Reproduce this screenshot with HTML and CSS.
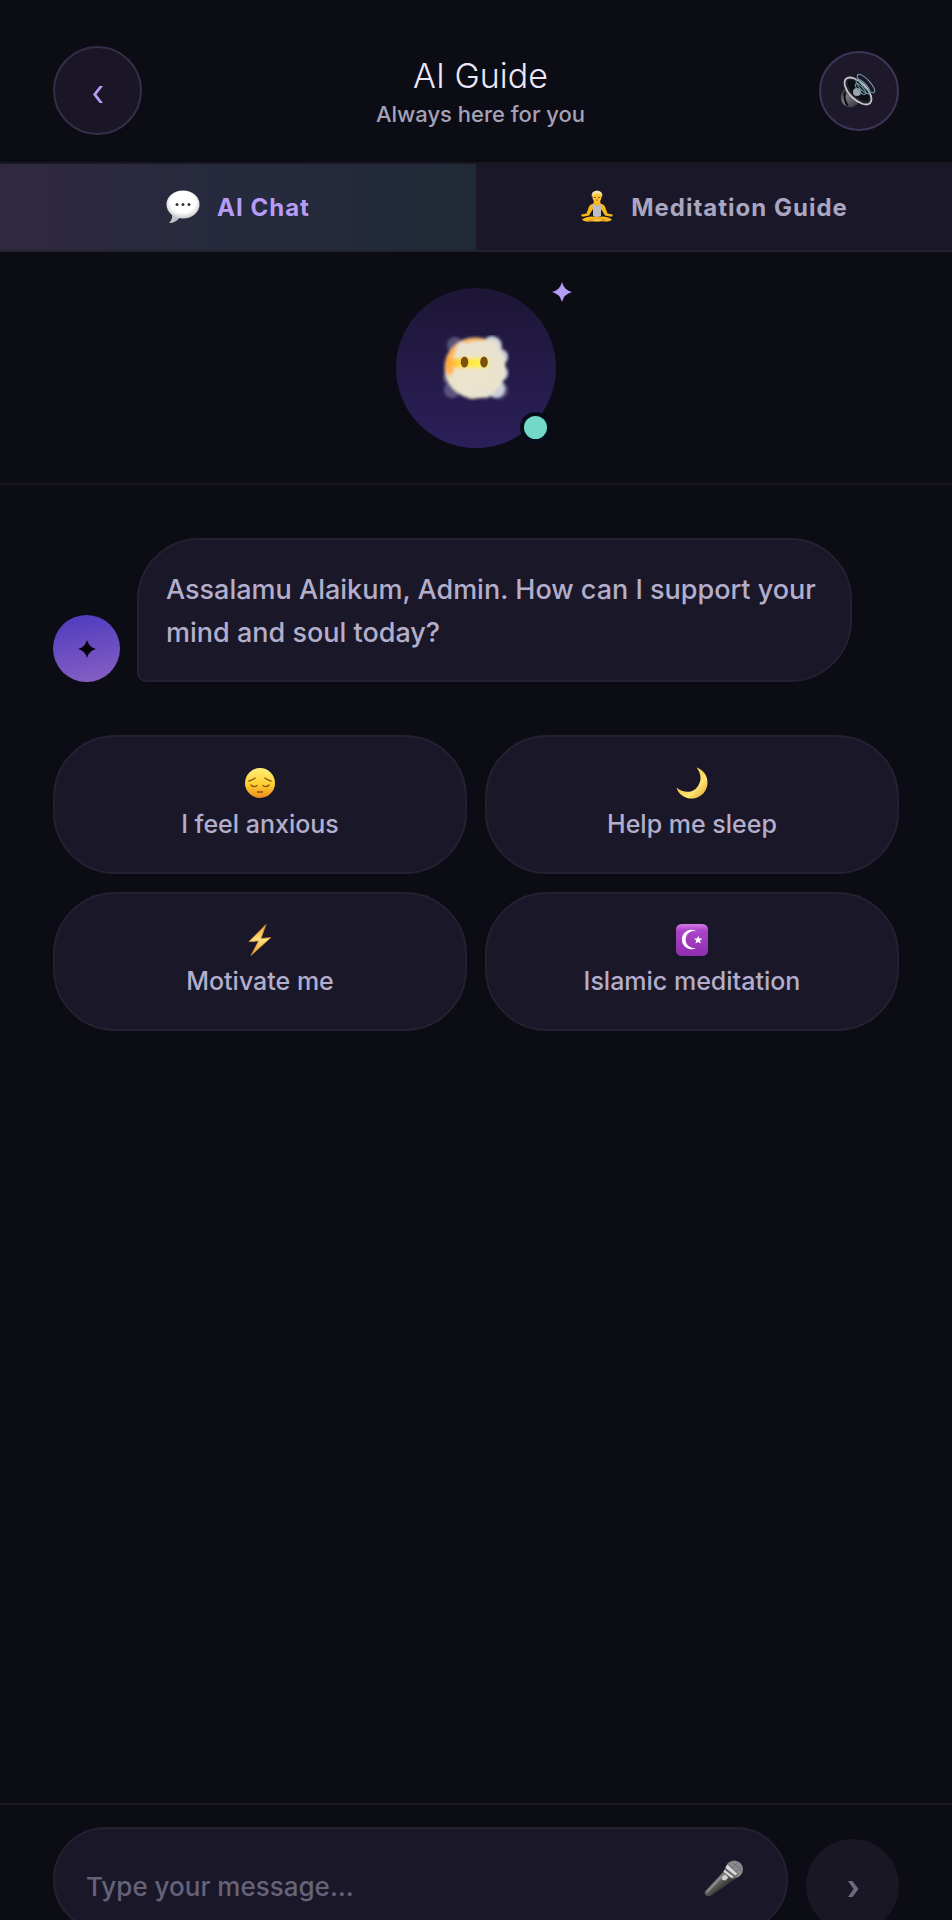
FILE: index.html
```html
<!DOCTYPE html>
<html lang="en">
<head>
<meta charset="utf-8">
<meta name="viewport" content="width=device-width, initial-scale=1">
<title>AI Guide</title>
<link rel="stylesheet" href="styles.css">
</head>
<body>
<div class="app">
  <header class="header">
    <button class="round back" aria-label="Back">
      <svg width="12" height="20" viewBox="0 0 12 20"><path d="M7.600 1H11L4.500 9.500L11 18H7.600L1 9.500Z" fill="#b79cf5"/></svg>
    </button>
    <div class="heading">
      <h1 class="title">AI Guide</h1>
      <p class="subtitle">Always here for you</p>
    </div>
    <button class="round sound" aria-label="Sound">
      <svg width="36" height="36" viewBox="0 0 36 36">
        <defs>
          <linearGradient id="spk" x1="0" y1="0" x2="1" y2="1"><stop offset="0" stop-color="#1a1b20"/><stop offset=".4" stop-color="#77767d"/><stop offset="1" stop-color="#25252b"/></linearGradient>
        </defs>
        <path d="M1 21L5 15L20 29L15 33Q10 36 4 32Q0 28 1 21Z" fill="url(#spk)"/>
        <path d="M5 19Q3 26 8 33" stroke="#090a0d" stroke-width="2" fill="none"/>
        <ellipse cx="18" cy="18" rx="8.500" ry="17" transform="rotate(-45 18 18)" fill="#222329" stroke="#c7c5cb" stroke-width="1.800"/>
        <ellipse cx="18.500" cy="17.500" rx="6" ry="14" transform="rotate(-45 18.500 17.500)" fill="#0d1116"/>
        <circle cx="17" cy="19" r="4" fill="#9aa4ad"/>
        <g fill="none" stroke="#719aa6" stroke-width="1.100">
          <ellipse cx="20.500" cy="16" rx="2.500" ry="7" transform="rotate(-43 20.500 16)"/>
          <ellipse cx="23" cy="13.500" rx="3.500" ry="9.500" transform="rotate(-43 23 13.500)"/>
          <ellipse cx="26" cy="10.500" rx="4" ry="12" transform="rotate(-43 26 10.500)"/>
        </g>
      </svg>
    </button>
  </header>

  <nav class="tabs">
    <button class="tab tab-active">
      <svg width="34" height="34" viewBox="0 0 34 34">
        <defs><radialGradient id="bub" cx=".5" cy=".42" r=".58"><stop offset=".65" stop-color="#fff"/><stop offset="1" stop-color="#c9c8cc"/></radialGradient></defs>
        <path d="M6 24Q7 29 3 33Q10 33 14 27Z" fill="#c2c1c6"/>
        <ellipse cx="17" cy="14.500" rx="16.500" ry="14" fill="url(#bub)"/>
        <g fill="#35343c"><circle cx="11" cy="14.500" r="1.500"/><circle cx="17" cy="14.500" r="1.500"/><circle cx="23" cy="14.500" r="1.500"/></g>
      </svg>
      <span>AI Chat</span>
    </button>
    <button class="tab">
      <svg width="34" height="34" viewBox="0 0 34 34">
        <path d="M14 11H20L21 14Q24.500 14 25.500 18L27.500 23.500L32.500 24.500Q33.500 27 30 26.500L25 25.500L21 19V25H13V19L9 25.500L4 26.500Q.5 27 1.500 24.500L6.500 23.500L8.500 18Q9.500 14 13 14Z" fill="#f7b719"/>
        <path d="M2 29.500Q8 25 17 27Q26 25 32 29.500Q30 32 24 31.500L17 30L10 31.500Q4 32 2 29.500Z" fill="#fbb81d"/>
        <path d="M9 30.500Q16 27 25 29.500Q20 33 9 30.500Z" fill="#ffd04a" stroke="#cf850d" stroke-width=".7"/>
        <path d="M12 14L15 15Q17 17 19 15L22 14L21 19V26Q17 28 13 26V19Z" fill="#bfbdc4"/>
        <ellipse cx="17" cy="7" rx="4.500" ry="5.500" fill="#ffc52b"/>
        <path d="M12 7.500Q10.500 1 17 .5Q23.500 1 22 7.500Q21 3.500 17 3.500Q13 3.500 12 7.500Z" fill="#f5e2aa"/>
        <path d="M14 7.500H16M18 7.500H20M16 10H18" stroke="#895514" fill="none"/>
      </svg>
      <span>Meditation Guide</span>
    </button>
  </nav>

  <section class="hero">
    <div class="orb">
      <svg width="68" height="66" viewBox="0 0 68 66">
        <defs>
          <linearGradient id="face" x1="0" y1="0" x2="1" y2="0"><stop offset="0" stop-color="#ffa03c"/><stop offset=".3" stop-color="#ffda3c"/><stop offset=".7" stop-color="#fff04c"/><stop offset="1" stop-color="#e7e2c9"/></linearGradient>
          <filter id="soft" x="-20%" y="-20%" width="140%" height="140%"><feGaussianBlur stdDeviation="1.500"/></filter>
        </defs>
        <g filter="url(#soft)">
          <g fill="#8f8daf" opacity=".5"><circle cx="13" cy="10" r="8"/><circle cx="10" cy="55" r="8"/><circle cx="57" cy="55" r="9"/><circle cx="8" cy="43" r="7"/></g>
          <g fill="#ccd0dc"><circle cx="50" cy="11" r="10"/><circle cx="58" cy="22" r="8"/><circle cx="58" cy="38" r="8"/><circle cx="54" cy="54" r="9"/></g>
          <circle cx="33" cy="33" r="30.500" fill="#ece4c8"/>
          <path d="M3 36Q2 14 20 6Q36 0 45 5L28 7L14 15L10 25L12 36L8 42Z" fill="#ffb555"/>
          <path d="M4 23H48Q54 28 48 33H4Z" fill="url(#face)"/>
          <g fill="#e8e2cf"><circle cx="21" cy="14" r="7"/><circle cx="35" cy="13" r="7"/><circle cx="49" cy="14" r="9"/><circle cx="56" cy="27" r="7"/><circle cx="55" cy="41" r="8"/><circle cx="43" cy="55" r="8"/><circle cx="30" cy="56" r="8"/></g>
          <g fill="#ebe4cd"><circle cx="16" cy="42" r="7"/><circle cx="28" cy="43" r="8"/><circle cx="42" cy="43" r="9"/><circle cx="20" cy="52" r="7"/></g>
        </g>
        <g fill="#7c500c"><ellipse cx="22.500" cy="27" rx="3.800" ry="5.500"/><ellipse cx="42" cy="27" rx="3.800" ry="5.500"/></g>
      </svg>
      <span class="status"></span>
      <svg class="sparkle" width="20" height="20" viewBox="0 0 20 20"><path d="M10 0Q12 8 20 10Q12 12 10 20Q8 12 0 10Q8 8 10 0Z" fill="#b79cf5"/></svg>
    </div>
  </section>

  <main class="chat">
    <div class="message">
      <div class="avatar"><svg width="18" height="18" viewBox="0 0 20 20"><path d="M10 0Q12 8 20 10Q12 12 10 20Q8 12 0 10Q8 8 10 0Z" fill="#05040a"/></svg></div>
      <p class="bubble">Assalamu Alaikum, Admin. How can I support your mind and soul today?</p>
    </div>
    <div class="prompts">
      <button class="prompt">
        <svg width="32" height="32" viewBox="0 0 32 32">
          <defs><linearGradient id="sad" x1="0" y1="0" x2="0" y2="1"><stop offset="0" stop-color="#fff07a"/><stop offset=".55" stop-color="#fdcf31"/><stop offset="1" stop-color="#ee8a1c"/></linearGradient></defs>
          <circle cx="16" cy="16" r="15" fill="url(#sad)"/>
          <g fill="none" stroke="#8a5310" stroke-width="1.400" stroke-linecap="round"><path d="M5 14Q9 13 11 11M27 14Q23 13 21 11M7 18Q10 21 13 18.500M25 18Q22 21 19 18.500M13.500 25H18.500"/></g>
        </svg>
        <span>I feel anxious</span>
      </button>
      <button class="prompt">
        <svg width="32" height="32" viewBox="0 0 32 32">
          <defs><linearGradient id="moon" x1="0" y1="0" x2="1" y2="1"><stop offset=".3" stop-color="#f3c444"/><stop offset=".65" stop-color="#ffe474"/><stop offset="1" stop-color="#dc9c28"/></linearGradient></defs>
          <path d="M20.500 .5C34 5 35 22 24 29C15 35 3 30 .5 20.500C8 27 18 26 22 19C26 13 25 6 20.500 .5Z" fill="url(#moon)"/>
        </svg>
        <span>Help me sleep</span>
      </button>
      <button class="prompt">
        <svg width="32" height="32" viewBox="0 0 32 32">
          <defs><linearGradient id="bolt" x1="0" y1="0" x2="0" y2="1"><stop offset="0" stop-color="#f2a932"/><stop offset=".5" stop-color="#ffe180"/><stop offset="1" stop-color="#ed9c32"/></linearGradient></defs>
          <path d="M22 .5L5 17.500L14.500 17L7 31.500L27 13.500L17 14.500Z" fill="url(#bolt)" stroke="#d78928" stroke-width=".7"/>
        </svg>
        <span>Motivate me</span>
      </button>
      <button class="prompt">
        <svg width="32" height="32" viewBox="0 0 32 32">
          <defs><linearGradient id="isl" x1="0" y1="0" x2="0" y2="1"><stop offset="0" stop-color="#d57be8"/><stop offset=".2" stop-color="#ad45c8"/><stop offset="1" stop-color="#8f2caf"/></linearGradient></defs>
          <rect width="32" height="32" rx="5.500" fill="url(#isl)"/>
          <path d="M21 7.500A9.700 9.700 0 1 0 21 23.500A8.500 8.500 0 1 1 21 7.500Z" fill="#fff"/>
          <path d="M22.200 11.500L23.200 14.400L26.500 14.600L24 16.600L24.800 19.600L22.200 17.900L19.400 19.600L20.300 16.500L18 14.500L21.200 14.400Z" fill="#fff"/>
        </svg>
        <span>Islamic meditation</span>
      </button>
    </div>
  </main>

  <form class="composer">
    <div class="field">
      <input class="input" type="text" aria-label="Message" placeholder="Type your message…">
      <button class="mic" type="button" aria-label="Record voice">
        <svg width="39" height="37" viewBox="0 0 40 38">
          <defs><linearGradient id="mic" x1="0" y1="0" x2="1" y2="1"><stop offset=".3" stop-color="#8b8b8b"/><stop offset=".6" stop-color="#3d403d"/><stop offset="1" stop-color="#222622"/></linearGradient></defs>
          <path d="M21 11L31 20L8 36Q3 39 1 35Q0 33 2 31Z" fill="url(#mic)"/>
          <path d="M3 33L20 15" stroke="#929292" stroke-width="1.500"/>
          <circle cx="31" cy="9.500" r="9" fill="#8b8a8d"/>
          <path d="M25 4L36 15M29 2L39 11M23 10L32 18M35 2L24 13M39 6L29 16" stroke="#68676b" stroke-width=".8"/>
          <path d="M23 7L34 16L31 20L20 11Z" fill="#696a6b"/>
          <path d="M24 5L34 14L32 16L22 8ZM21 10L30 17L29 19L20 12Z" fill="#d9d8da"/>
          <path d="M19 17L22 15L25 18L22 21L18 20Z" fill="#d0d0cf"/>
        </svg>
      </button>
    </div>
    <button class="send" type="submit" aria-label="Send">
      <svg width="12" height="16" viewBox="0 0 12 16"><path d="M1 0H5.500L11.500 8L5.500 16H1L6.500 8Z" fill="#6c6980"/></svg>
    </button>
  </form>
</div>
</body>
</html>
```
FILE: styles.css
```css
* {
  box-sizing: border-box;
}

body {
  margin: 0;
  overflow: hidden;
  background: #0c0c15;
  color: #b3aecb;
  font-family: Inter, "Liberation Sans", sans-serif;
}

button,
input {
  margin: 0;
  padding: 0;
  border: 0;
  background: none;
  color: inherit;
  font: inherit;
}

svg {
  display: block;
  flex: none;
}

.app {
  display: flex;
  flex-direction: column;
  height: 100vh;
}

.header {
  display: flex;
  align-items: center;
  justify-content: space-between;
  padding: 46px 53px 27px;
  border-bottom: 2px solid #171622;
}

.round {
  display: flex;
  align-items: center;
  justify-content: center;
  border: 2px solid #342e48;
  border-radius: 50%;
  background: #1b1626;
}

.back {
  width: 89px;
  height: 89px;
  padding-top: 8px;
}

.sound {
  width: 80px;
  height: 80px;
  padding-right: 2px;
  border-color: #3d3557;
  background: #1e182b;
}

.heading {
  padding-top: 2px;
  text-align: center;
}

.title {
  margin: 0;
  color: #ebe8fa;
  font-size: 34px;
  font-weight: 300;
  line-height: 44px;
}

.subtitle {
  margin: 0;
  color: #a5a1b8;
  font-size: 22px;
  font-weight: 500;
  line-height: 32px;
}

.tabs {
  display: grid;
  grid-template-columns: 1fr 1fr;
  border-bottom: 2px solid #232230;
  background: #1a1828;
}

.tab {
  display: flex;
  align-items: center;
  justify-content: center;
  gap: 17px;
  height: 86px;
  color: #aaa5c0;
  font-size: 24px;
  font-weight: 700;
  letter-spacing: 1px;
}

.tab-active {
  background: linear-gradient(90deg, #302841, #262a3d 50%, #202936);
  color: #b79cf5;
}

.hero {
  display: flex;
  justify-content: center;
  padding: 36px 36px 35px;
  border-bottom: 2px solid #171622;
}

.orb {
  position: relative;
  display: flex;
  align-items: center;
  justify-content: center;
  width: 160px;
  height: 160px;
  border-radius: 50%;
  background: linear-gradient(180deg, #1d1636, #2b1f59);
}

.status {
  position: absolute;
  right: 5px;
  bottom: 5px;
  width: 31px;
  height: 31px;
  border: 4px solid #050d18;
  border-radius: 50%;
  background: #73d8ca;
}

.sparkle {
  position: absolute;
  top: -6px;
  right: -16px;
}

.chat {
  flex: 1;
  padding: 53px;
}

.message {
  display: flex;
  align-items: flex-end;
  gap: 17px;
  margin-bottom: 53px;
}

.avatar {
  display: flex;
  flex: none;
  align-items: center;
  justify-content: center;
  width: 67px;
  height: 67px;
  border-radius: 50%;
  background: linear-gradient(170deg, #4d3bbf, #8860c3);
}

.bubble {
  max-width: 715px;
  margin: 0;
  padding: 28px 27px 26px;
  border: 2px solid #232132;
  border-radius: 62px 62px 62px 9px;
  background: #1a1828;
  font-size: 27px;
  font-weight: 500;
  line-height: 43px;
}

.prompts {
  display: grid;
  grid-template-columns: 1fr 1fr;
  gap: 18px;
}

.prompt {
  display: flex;
  flex-direction: column;
  align-items: center;
  gap: 8px;
  padding: 30px 20px 31px;
  border: 2px solid #232132;
  border-radius: 62px;
  background: #1a1828;
  font-size: 25px;
  font-weight: 500;
  line-height: 34px;
}

.composer {
  display: flex;
  align-items: flex-end;
  gap: 18px;
  margin-bottom: -12px;
  padding: 22px 53px 0;
  border-top: 2px solid #191824;
}

.field {
  display: flex;
  flex: 1;
  align-items: center;
  height: 105px;
  padding: 0 43px 0 31px;
  border: 2px solid #232132;
  border-radius: 53px;
  background: #1a1828;
}

.input {
  flex: 1;
  min-width: 0;
  height: 100%;
  padding-top: 14px;
  outline: 0;
  font-size: 26px;
  font-weight: 500;
}

.input::placeholder {
  color: #65627a;
  opacity: 1;
}

.mic {
  padding-bottom: 3px;
}

.send {
  display: flex;
  align-items: center;
  justify-content: center;
  width: 93px;
  height: 93px;
  padding-top: 6px;
  border-radius: 50%;
  background: #191724;
}
```
